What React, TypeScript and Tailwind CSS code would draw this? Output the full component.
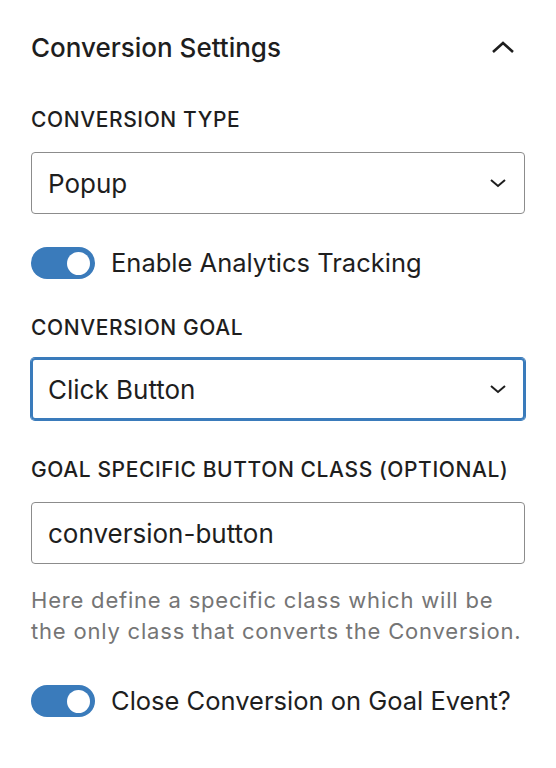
export default function App() {
  const font = { fontFamily: "Inter, 'Noto Sans', sans-serif" };

  return (
    <div className="min-h-screen bg-white text-[#1e1e1e]" style={font}>
      <div className="px-[31px] pt-[32px]">
        {/* Panel header */}
        <div className="flex items-center justify-between h-[32px]">
          <h2 className="text-[26px] leading-[32px] font-medium">Conversion Settings</h2>
          <svg width="24" height="14" viewBox="0 0 24 14" className="mr-[10px] -mt-[3px]" fill="none" stroke="#1e1e1e" strokeWidth="2.6">
            <path d="M2 12 L12 3 L22 12" />
          </svg>
        </div>

        {/* Conversion type */}
        <div className="mt-[42px]">
          <Label text="Conversion Type" />
          <SelectBox value="Popup" />
        </div>

        <Toggle label="Enable Analytics Tracking" className="mt-[33px]" />

        {/* Conversion goal */}
        <div className="mt-[35px]">
          <Label text="Conversion Goal" tight />
          <SelectBox value="Click Button" focused />
        </div>

        {/* Button class */}
        <div className="mt-[36px]">
          <Label text="Goal Specific Button Class (Optional)" />
          <div className="h-[62px] rounded-[4px] border border-[#8c8c8c] flex items-center pl-[16px] text-[26px]">
            conversion-button
          </div>
          <p className="mt-[21px] -mr-[20px] whitespace-nowrap text-[22px] leading-[31px] tracking-[0.8px] text-[#757575]">
            Here define a specific class which will be
            <br />
            the only class that converts the Conversion.
          </p>
        </div>

        <Toggle label="Close Conversion on Goal Event?" className="mt-[38px]" />
      </div>
    </div>
  );
}

function Label({ text, tight }: { text: string; tight?: boolean }) {
  return (
    <div
      className={
        tight
          ? "uppercase text-[21px] leading-[28px] tracking-[0.6px] font-medium mb-[16px]"
          : "uppercase text-[21px] leading-[28px] tracking-[0.6px] font-medium mb-[18px]"
      }
    >
      {text}
    </div>
  );
}

function SelectBox({ value, focused }: { value: string; focused?: boolean }) {
  return (
    <div
      className={
        focused
          ? "h-[62px] rounded-[4px] border-[2px] border-[#3a7bbb] shadow-[0_0_0_1px_#3a7bbb] flex items-center justify-between pl-[15px] pr-[16px]"
          : "h-[62px] rounded-[4px] border border-[#8c8c8c] flex items-center justify-between pl-[16px] pr-[17px]"
      }
    >
      <span className="text-[26px]">{value}</span>
      <svg width="18" height="10" viewBox="0 0 18 10" fill="none" stroke="#1e1e1e" strokeWidth="2">
        <path d="M2 2 L9 8 L16 2" />
      </svg>
    </div>
  );
}

function Toggle({ label, className }: { label: string; className?: string }) {
  return (
    <div className={`flex items-center gap-[16px] ${className ?? ""}`}>
      <div className="w-[64px] h-[32px] rounded-full bg-[#3a7bbb] flex items-center justify-end pr-[5px]">
        <div className="w-[23px] h-[23px] rounded-full bg-white" />
      </div>
      <span className="text-[25.5px] leading-[32px]">{label}</span>
    </div>
  );
}
